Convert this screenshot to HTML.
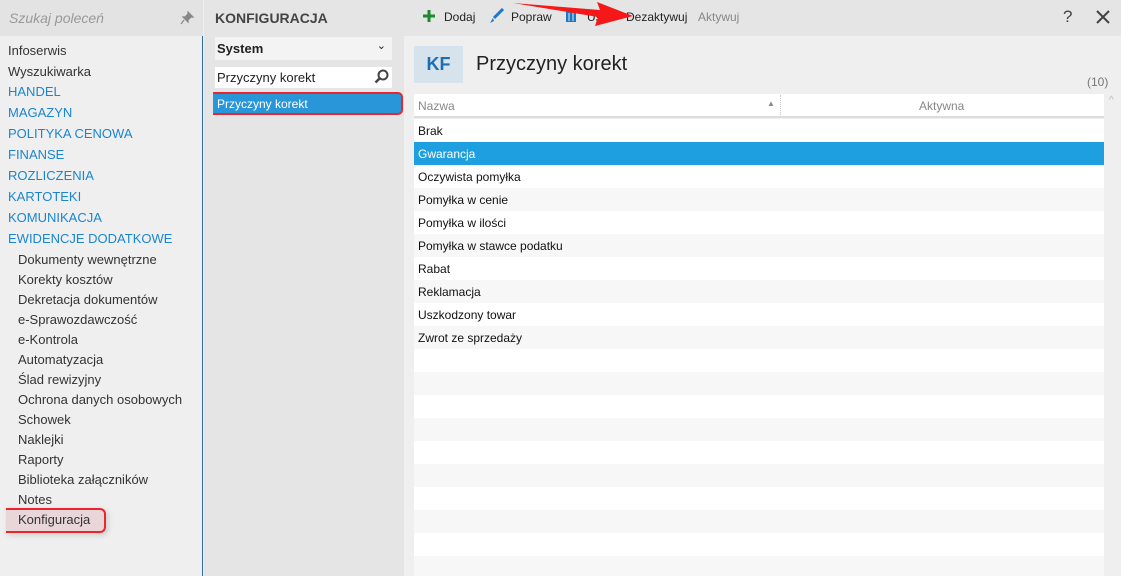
<!DOCTYPE html>
<html><head><meta charset="utf-8"><style>
*{margin:0;padding:0;box-sizing:border-box}
html,body{width:1121px;height:576px;overflow:hidden}
body{position:relative;font-family:"Liberation Sans",sans-serif;background:#efefef;color:#222}
.abs{position:absolute}
#left{left:0;top:0;width:203px;height:576px;background:#efefef;border-right:1px solid #2b6ea6}
#search{left:0;top:0;width:203px;height:36px;background:#e3e3e3;font-style:italic;color:#999;font-size:14px;padding:10px 0 0 9px}
.nav{position:absolute;left:8px;font-size:13px;color:#333;white-space:nowrap}
.nav.b{color:#1a86d0}
.nav.s{left:18px}
#mid{left:204px;top:0;width:200px;height:576px;background:#e5e5e5}
#top{left:404px;top:0;width:717px;height:36px;background:#e5e5e5}
.row{position:absolute;left:414px;width:690px;height:23px;font-size:12px;padding:5px 0 0 4px;color:#111}
</style></head><body>
<div id="left" class="abs"></div>
<div id="search" class="abs">Szukaj poleceń</div>
<svg class="abs" style="left:180px;top:11px" width="14" height="14" viewBox="0 0 14 14"><path d="M8 1l5 5-2 0-3 3 0 2-5-5 2 0 3-3z M4 9l-3 4" stroke="#888" fill="#888" stroke-width="1.2"/></svg>
<div class="nav" style="top:43px">Infoserwis</div>
<div class="nav" style="top:64px">Wyszukiwarka</div>
<div class="nav b" style="top:84px">HANDEL</div>
<div class="nav b" style="top:105px">MAGAZYN</div>
<div class="nav b" style="top:126px">POLITYKA CENOWA</div>
<div class="nav b" style="top:147px">FINANSE</div>
<div class="nav b" style="top:168px">ROZLICZENIA</div>
<div class="nav b" style="top:189px">KARTOTEKI</div>
<div class="nav b" style="top:210px">KOMUNIKACJA</div>
<div class="nav b" style="top:231px">EWIDENCJE DODATKOWE</div>
<div class="nav s" style="top:252px">Dokumenty wewnętrzne</div>
<div class="nav s" style="top:272px">Korekty kosztów</div>
<div class="nav s" style="top:292px">Dekretacja dokumentów</div>
<div class="nav s" style="top:312px">e-Sprawozdawczość</div>
<div class="nav s" style="top:332px">e-Kontrola</div>
<div class="nav s" style="top:352px">Automatyzacja</div>
<div class="nav s" style="top:372px">Ślad rewizyjny</div>
<div class="nav s" style="top:392px">Ochrona danych osobowych</div>
<div class="nav s" style="top:412px">Schowek</div>
<div class="nav s" style="top:432px">Naklejki</div>
<div class="nav s" style="top:452px">Raporty</div>
<div class="nav s" style="top:472px">Biblioteka załączników</div>
<div class="nav s" style="top:492px">Notes</div>
<div class="abs" style="left:6px;top:508px;width:100px;height:25px;border:2px solid #e8262c;border-left:none;border-radius:0 6px 6px 0;background:rgba(225,190,195,0.5);box-shadow:2px 2px 6px rgba(0,0,0,0.15)"></div>
<div class="nav s" style="top:512px">Konfiguracja</div>

<div id="mid" class="abs"></div>
<div class="abs" style="left:215px;top:10px;font-size:14px;font-weight:bold;color:#444">KONFIGURACJA</div>
<div class="abs" style="left:215px;top:37px;width:177px;height:23px;background:#f3f3f3;font-size:13px;font-weight:bold;padding:4px 0 0 2px">System<span style="position:absolute;right:6px;top:2px;font-weight:normal;font-size:11px">⌄</span></div>
<div class="abs" style="left:215px;top:67px;width:177px;height:21px;background:#fff;font-size:13px;padding:3px 0 0 2px">Przyczyny korekt</div>
<svg class="abs" style="left:374px;top:69px" width="15" height="15" viewBox="0 0 15 15"><circle cx="9" cy="6" r="4.5" stroke="#444" stroke-width="2" fill="none"/><path d="M6 9L1.5 13.5" stroke="#444" stroke-width="2.5"/></svg>
<div class="abs" style="left:213px;top:92px;width:190px;height:23px;background:#2896d8;border:2px solid #e8262c;border-left:none;border-radius:0 5px 5px 0;color:#fff;font-size:12px;padding:3px 0 0 4px">Przyczyny korekt</div>

<div id="top" class="abs"></div>
<svg class="abs" style="left:422px;top:9px" width="14" height="14"><path d="M7 1v12M1 7h12" stroke="#1c8a2e" stroke-width="3"/></svg>
<div class="abs" style="left:444px;top:10px;font-size:12px">Dodaj</div>
<svg class="abs" style="left:488px;top:8px" width="16" height="16"><path d="M15 1L6 10" stroke="#1a7ac8" stroke-width="3"/><path d="M5 10l-3 5 4-2z" fill="#1a7ac8"/></svg>
<div class="abs" style="left:511px;top:10px;font-size:12px">Popraw</div>
<svg class="abs" style="left:565px;top:9px" width="12" height="14"><rect x="1" y="2" width="10" height="11" fill="#1a7ac8"/><path d="M4 4v8M8 4v8" stroke="#e5e5e5"/></svg>
<div class="abs" style="left:587px;top:10px;font-size:12px">Usuń</div>
<div class="abs" style="left:626px;top:10px;font-size:12px">Dezaktywuj</div>
<div class="abs" style="left:698px;top:10px;font-size:12px;color:#888">Aktywuj</div>
<svg class="abs" style="left:505px;top:0" width="130" height="30"><path d="M8 3L95 10 92 2 128 16 90 26 93 17z" fill="#f51818"/></svg>
<div class="abs" style="left:1063px;top:7px;font-size:17px;color:#444">?</div>
<svg class="abs" style="left:1096px;top:10px" width="14" height="14"><path d="M1 1l12 12M13 1L1 13" stroke="#444" stroke-width="2"/></svg>

<div class="abs" style="left:414px;top:46px;width:49px;height:37px;background:#d6e2ec;color:#1d6fb3;font-size:18px;font-weight:bold;text-align:center;padding-top:8px">KF</div>
<div class="abs" style="left:476px;top:53px;font-size:20px;color:#222">Przyczyny korekt</div>
<div class="abs" style="left:1087px;top:75px;font-size:12px;color:#777">(10)</div>

<div class="abs" style="left:414px;top:94px;width:690px;height:24px;background:#fff;border-bottom:2px solid #ddd"></div>
<div class="abs" style="left:418px;top:99px;font-size:12px;color:#888">Nazwa</div>
<div class="abs" style="left:767px;top:99px;font-size:8px;color:#888">▲</div>
<div class="abs" style="left:780px;top:95px;height:20px;border-left:1px dotted #ccc"></div>
<div class="abs" style="left:919px;top:99px;font-size:12px;color:#888">Aktywna</div>
<div class="abs" style="left:1109px;top:95px;font-size:10px;color:#bbb">^</div>

<div class="row" style="top:119px;background:#fff">Brak</div>
<div class="row" style="top:142px;background:#1ea0e0;color:#fff">Gwarancja</div>
<div class="row" style="top:165px;background:#fff">Oczywista pomyłka</div>
<div class="row" style="top:188px;background:#f7f7f7">Pomyłka w cenie</div>
<div class="row" style="top:211px;background:#fff">Pomyłka w ilości</div>
<div class="row" style="top:234px;background:#f7f7f7">Pomyłka w stawce podatku</div>
<div class="row" style="top:257px;background:#fff">Rabat</div>
<div class="row" style="top:280px;background:#f7f7f7">Reklamacja</div>
<div class="row" style="top:303px;background:#fff">Uszkodzony towar</div>
<div class="row" style="top:326px;background:#f7f7f7">Zwrot ze sprzedaży</div>
<div class="row" style="top:349px;background:#fff"></div>
<div class="row" style="top:372px;background:#f7f7f7"></div>
<div class="row" style="top:395px;background:#fff"></div>
<div class="row" style="top:418px;background:#f7f7f7"></div>
<div class="row" style="top:441px;background:#fff"></div>
<div class="row" style="top:464px;background:#f7f7f7"></div>
<div class="row" style="top:487px;background:#fff"></div>
<div class="row" style="top:510px;background:#f7f7f7"></div>
<div class="row" style="top:533px;background:#fff"></div>
<div class="row" style="top:556px;background:#f7f7f7;height:20px"></div>
</body></html>
